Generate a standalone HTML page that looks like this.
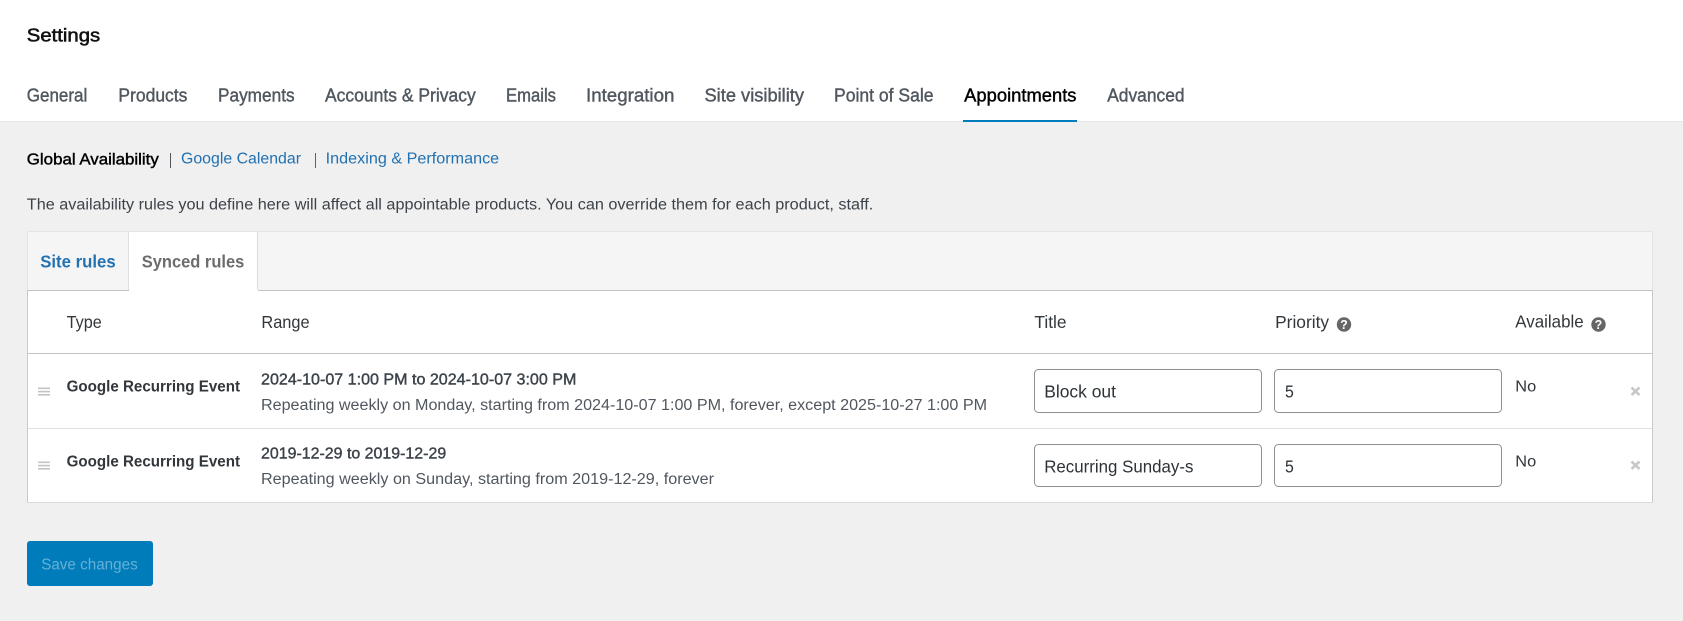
<!DOCTYPE html>
<html lang="en"><head><meta charset="utf-8"><title>Settings</title>
<style>
html,body{margin:0;padding:0;width:1683px;height:621px;overflow:hidden;background:#f0f0f0}
svg{display:block;font-family:"Liberation Sans",Arial,sans-serif}
.sb{stroke:currentColor;stroke-width:.4px}
</style></head><body>
<svg xmlns="http://www.w3.org/2000/svg" width="1683" height="621" viewBox="0 0 1683 621">
<rect width="1683" height="621" fill="#f0f0f0"/>
<rect width="1683" height="121" fill="#fff"/>
<rect y="121" width="1683" height="1" fill="#e6e6e6"/>
<text x="26.8" y="41.5" font-size="18.5" fill="#111" stroke="#111" stroke-width=".55" textLength="73.4" lengthAdjust="spacingAndGlyphs">Settings</text>
<g font-size="18" fill="#50575e" class="sb" style="color:#50575e">
<text x="26.8" y="101.5" textLength="60.5" lengthAdjust="spacingAndGlyphs">General</text>
<text x="118.4" y="101.5" textLength="69" lengthAdjust="spacingAndGlyphs">Products</text>
<text x="218" y="101.5" textLength="76.6" lengthAdjust="spacingAndGlyphs">Payments</text>
<text x="325" y="101.5" textLength="150.7" lengthAdjust="spacingAndGlyphs">Accounts &amp; Privacy</text>
<text x="506" y="101.5" textLength="50" lengthAdjust="spacingAndGlyphs">Emails</text>
<text x="586" y="101.5" textLength="88.4" lengthAdjust="spacingAndGlyphs">Integration</text>
<text x="704.5" y="101.5" textLength="99.5" lengthAdjust="spacingAndGlyphs">Site visibility</text>
<text x="834" y="101.5" textLength="99.5" lengthAdjust="spacingAndGlyphs">Point of Sale</text>
<text x="1107.2" y="101.5" textLength="77.4" lengthAdjust="spacingAndGlyphs">Advanced</text>
</g>
<text x="964.2" y="101.5" font-size="18" fill="#000" class="sb" style="color:#000" textLength="112.3" lengthAdjust="spacingAndGlyphs">Appointments</text>
<rect x="963" y="120" width="114" height="2" fill="#007cba"/>

<text x="26.8" y="164.5" font-size="15.5" fill="#000" class="sb" style="color:#000" textLength="132" lengthAdjust="spacingAndGlyphs">Global Availability</text>
<rect x="170" y="153" width="1" height="15" fill="#50575e"/>
<text x="181" y="163.5" font-size="15.5" fill="#2271b1" textLength="120" lengthAdjust="spacingAndGlyphs">Google Calendar</text>
<rect x="315" y="153" width="1" height="15" fill="#2271b1"/>
<text x="325.7" y="163.5" font-size="15.5" fill="#2271b1" textLength="173.5" lengthAdjust="spacingAndGlyphs">Indexing &amp; Performance</text>
<text x="26.8" y="209.5" font-size="15.5" fill="#3c434a" textLength="846.5" lengthAdjust="spacingAndGlyphs">The availability rules you define here will affect all appointable products. You can override them for each product, staff.</text>

<!-- panel -->
<rect x="27" y="231" width="1626" height="272" fill="#fff"/>
<rect x="28" y="232" width="1624" height="58" fill="#f5f5f5"/>
<rect x="27" y="231" width="1626" height="1" fill="#e5e5e5"/>
<rect x="27" y="231" width="1" height="59" fill="#e5e5e5"/>
<rect x="1652" y="231" width="1" height="59" fill="#e5e5e5"/>
<rect x="27" y="290" width="1626" height="1" fill="#c3c4c7"/>
<rect x="27" y="291" width="1" height="212" fill="#c9c9c9"/>
<rect x="1652" y="291" width="1" height="212" fill="#c9c9c9"/>
<rect x="27" y="502" width="1626" height="1" fill="#dcdcdc"/>
<rect x="129" y="232" width="129" height="59" fill="#fff"/>
<rect x="128" y="232" width="1" height="58" fill="#e0e0e0"/>
<rect x="257" y="232" width="1" height="58" fill="#dcdcdc"/>
<text x="40.2" y="267.5" font-size="17.5" font-weight="700" fill="#2271b1" textLength="75.5" lengthAdjust="spacingAndGlyphs">Site rules</text>
<text x="141.8" y="267.5" font-size="17.5" font-weight="700" fill="#6c6c6c" textLength="102.5" lengthAdjust="spacingAndGlyphs">Synced rules</text>

<g font-size="17.5" fill="#32373c">
<text x="66.6" y="328" textLength="35.2" lengthAdjust="spacingAndGlyphs">Type</text>
<text x="261.4" y="328" textLength="48.2" lengthAdjust="spacingAndGlyphs">Range</text>
<text x="1034.4" y="328" textLength="32.2" lengthAdjust="spacingAndGlyphs">Title</text>
<text x="1275.1" y="328" textLength="54" lengthAdjust="spacingAndGlyphs">Priority</text>
<text x="1515.3" y="327.5" textLength="68.4" lengthAdjust="spacingAndGlyphs">Available</text>
</g>
<circle cx="1344" cy="324.5" r="7.2" fill="#666"/>
<text x="1344" y="329" font-size="12.5" font-weight="700" fill="#fff" text-anchor="middle">?</text>
<circle cx="1598.5" cy="324.5" r="7.2" fill="#666"/>
<text x="1598.5" y="329" font-size="12.5" font-weight="700" fill="#fff" text-anchor="middle">?</text>

<rect x="28" y="353" width="1624" height="1" fill="#c3c4c7"/>
<rect x="28" y="428" width="1624" height="1" fill="#e1e1e1"/>

<!-- handles -->
<g fill="#c4c4c4">
<rect x="38" y="387.5" width="12" height="1.6"/><rect x="38" y="390.8" width="12" height="1.6"/><rect x="38" y="394" width="12" height="1.6"/>
<rect x="38" y="461.5" width="12" height="1.6"/><rect x="38" y="464.8" width="12" height="1.6"/><rect x="38" y="468" width="12" height="1.6"/>
</g>

<g font-size="15.5" font-weight="700" fill="#32373c">
<text x="66.6" y="391.5" textLength="173.4" lengthAdjust="spacingAndGlyphs">Google Recurring Event</text>
<text x="66.6" y="466.5" textLength="173.4" lengthAdjust="spacingAndGlyphs">Google Recurring Event</text>
</g>
<g font-size="15.5" fill="#3c434a" class="sb" style="color:#3c434a">
<text x="261" y="384.5" textLength="315.4" lengthAdjust="spacingAndGlyphs">2024-10-07 1:00 PM to 2024-10-07 3:00 PM</text>
<text x="261" y="458.5" textLength="185.2" lengthAdjust="spacingAndGlyphs">2019-12-29 to 2019-12-29</text>
</g>
<g font-size="15.5" fill="#50575e">
<text x="261" y="410" textLength="726" lengthAdjust="spacingAndGlyphs">Repeating weekly on Monday, starting from 2024-10-07 1:00 PM, forever, except 2025-10-27 1:00 PM</text>
<text x="261" y="484" textLength="453" lengthAdjust="spacingAndGlyphs">Repeating weekly on Sunday, starting from 2019-12-29, forever</text>
</g>

<!-- inputs -->
<g fill="#fff" stroke="#8c8f94">
<rect x="1034.5" y="369.5" width="227" height="43" rx="4"/>
<rect x="1274.5" y="369.5" width="227" height="43" rx="4"/>
<rect x="1034.5" y="444.5" width="227" height="42" rx="4"/>
<rect x="1274.5" y="444.5" width="227" height="42" rx="4"/>
</g>
<g font-size="17.5" fill="#2c3338">
<text x="1044.2" y="397.5" textLength="71.8" lengthAdjust="spacingAndGlyphs">Block out</text>
<text x="1285" y="397.5" textLength="8.8" lengthAdjust="spacingAndGlyphs">5</text>
<text x="1044.2" y="472.5" textLength="149.2" lengthAdjust="spacingAndGlyphs">Recurring Sunday-s</text>
<text x="1285" y="472.5" textLength="8.8" lengthAdjust="spacingAndGlyphs">5</text>
</g>
<g font-size="15.5" fill="#32373c">
<text x="1515.3" y="391.5" textLength="20.9" lengthAdjust="spacingAndGlyphs">No</text>
<text x="1515.3" y="466.5" textLength="20.9" lengthAdjust="spacingAndGlyphs">No</text>
</g>
<g stroke="#c8c8c8" stroke-width="2.6">
<path d="M1631.5 387.5L1639.5 395M1639.5 387.5L1631.5 395"/>
<path d="M1631.5 461.5L1639.5 469M1639.5 461.5L1631.5 469"/>
</g>

<!-- button -->
<rect x="27" y="541" width="126" height="45" rx="3" fill="#007cba"/>
<text x="41.2" y="569.5" font-size="15.5" fill="#66b0d6" textLength="96.5" lengthAdjust="spacingAndGlyphs">Save changes</text>
</svg>
</body></html>
